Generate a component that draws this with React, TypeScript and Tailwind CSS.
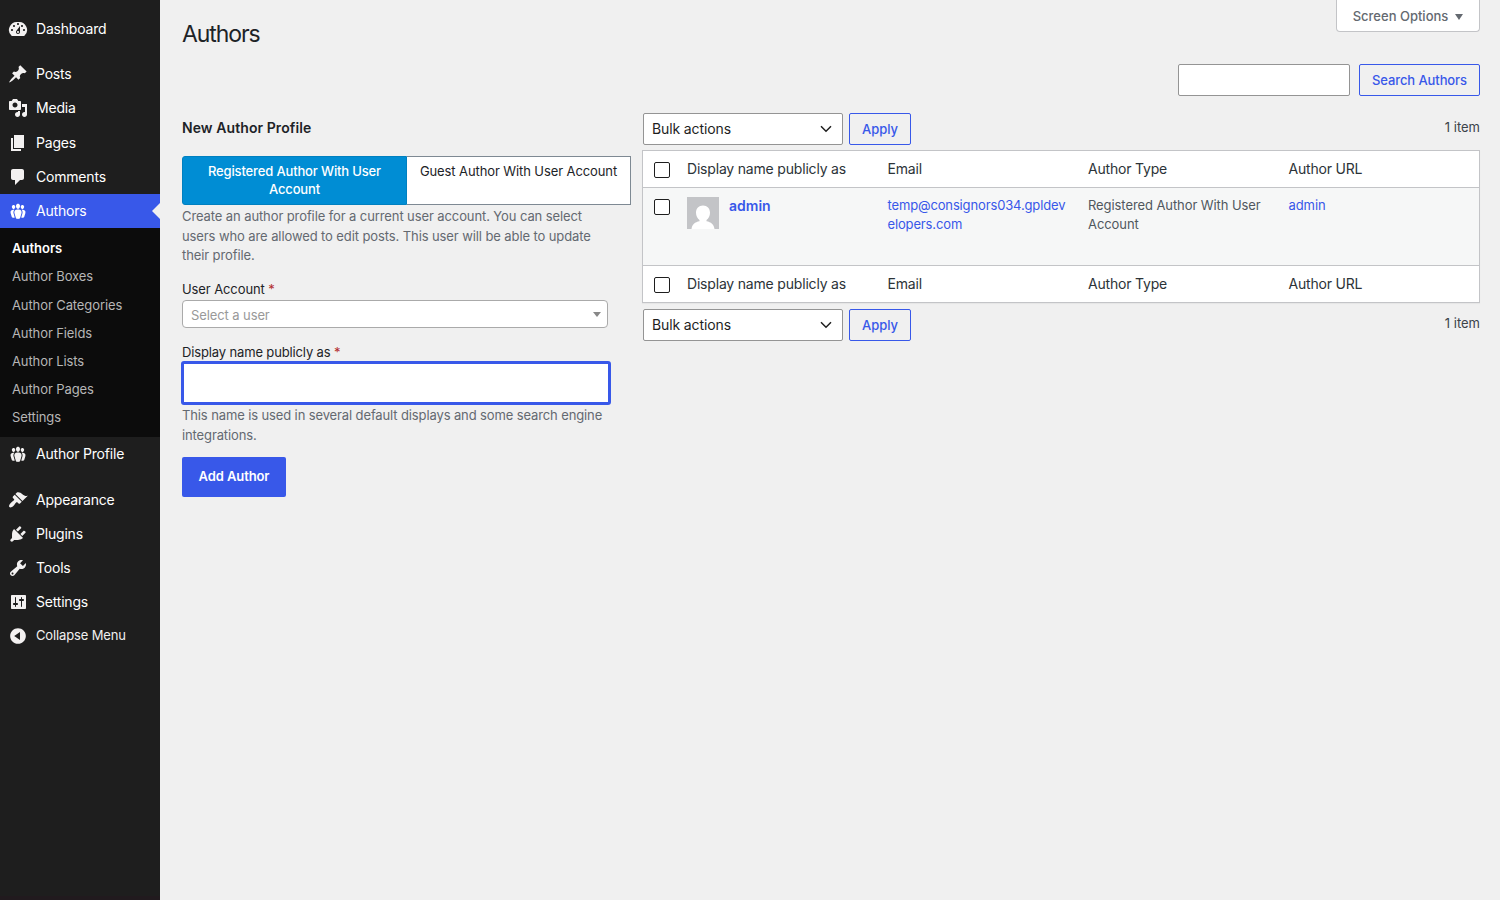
import clsx from 'clsx'

const icons = {
  dashboard:
    'M3.76 17h12.48A7.998 7.998 0 0 0 10 3a8 8 0 0 0-6.24 14zM10 4c.55 0 1 .45 1 1s-.45 1-1 1-1-.45-1-1 .45-1 1-1zM6 6c.55 0 1 .45 1 1s-.45 1-1 1-1-.45-1-1 .45-1 1-1zm8 0c.55 0 1 .45 1 1s-.45 1-1 1-1-.45-1-1 .45-1 1-1zm-5.37 5.55L12 7v6c0 1.1-.9 2-2 2s-2-.9-2-2c0-.57.24-1.08.63-1.45zM4 10c.55 0 1 .45 1 1s-.45 1-1 1-1-.45-1-1 .45-1 1-1zm12 0c.55 0 1 .45 1 1s-.45 1-1 1-1-.45-1-1 .45-1 1-1zm-5 3c0-.55-.45-1-1-1s-1 .45-1 1 .45 1 1 1 1-.45 1-1z',
  pin: 'M10.44 3.02l1.82-1.82 6.36 6.35-1.83 1.82c-1.05-.68-2.48-.57-3.41.36l-.75.75c-.92.93-1.04 2.35-.35 3.41l-1.83 1.82-2.41-2.41-2.8 2.79c-.42.42-3.38 2.71-3.8 2.29s1.86-3.39 2.28-3.81l2.79-2.79L4.1 9.36l1.83-1.82c1.05.69 2.48.57 3.4-.36l.75-.75c.93-.92 1.05-2.35.36-3.41z',
  media:
    'M13 11V4c0-.55-.45-1-1-1h-1.67L9 1H5L3.67 3H2c-.55 0-1 .45-1 1v7c0 .55.45 1 1 1h10c.55 0 1-.45 1-1zM7 4.5c1.38 0 2.5 1.12 2.5 2.5S8.38 9.5 7 9.5 4.5 8.38 4.5 7 5.62 4.5 7 4.5zM14 6h5v10.5c0 1.38-1.12 2.5-2.5 2.5S14 17.88 14 16.5s1.12-2.5 2.5-2.5c.17 0 .34.02.5.05V9h-3V6zm-4 8.05V13h2v3.5c0 1.38-1.12 2.5-2.5 2.5S7 17.88 7 16.5 8.12 14 9.5 14c.17 0 .34.02.5.05z',
  page: 'M6 15V2h10v13H6zm-1 1h8v2H3V5h2v11z',
  comment:
    'M5 2h9c1.1 0 2 .9 2 2v7c0 1.1-.9 2-2 2h-2l-5 5v-5H5c-1.1 0-2-.9-2-2V4c0-1.1.9-2 2-2z',
  groups:
    'M8.03 4.46c-.29 1.28.55 3.46 1.97 3.46 1.41 0 2.25-2.18 1.96-3.46-.22-.98-1.08-1.63-1.96-1.63-.89 0-1.74.65-1.97 1.63zm-4.13.9c-.25 1.08.47 2.93 1.67 2.93s1.92-1.85 1.67-2.93c-.19-.83-.92-1.39-1.67-1.39s-1.48.56-1.67 1.39zm8.86 0c-.25 1.08.47 2.93 1.66 2.93 1.2 0 1.92-1.85 1.67-2.93-.19-.83-.92-1.39-1.67-1.39-.74 0-1.47.56-1.66 1.39zm-.59 11.43l1.25-4.3C14.2 10 12.71 8.47 10 8.47c-2.72 0-4.21 1.53-3.44 4.02l1.26 4.3C8.05 17.51 9 18 10 18c.98 0 1.94-.49 2.17-1.21zm-6.1-7.63c-.49.67-.96 1.83-.42 3.59l1.12 3.79c-.34.2-.77.31-1.2.31-.85 0-1.65-.41-1.85-1.03l-1.07-3.65c-.65-2.11.61-3.4 2.92-3.4.27 0 .54.02.79.06-.1.1-.2.22-.29.33zm8.35-.39c2.31 0 3.58 1.29 2.92 3.4l-1.07 3.65c-.2.62-1 1.03-1.85 1.03-.43 0-.86-.11-1.2-.31l1.11-3.77c.55-1.78.08-2.94-.42-3.61-.08-.11-.18-.23-.28-.33.25-.04.51-.06.79-.06z',
  appearance:
    'M14.48 11.06L7.41 3.99l1.5-1.5c.5-.56 2.3-.47 3.51.32 1.21.8 1.43 1.28 2.91 2.1 1.18.64 2.45 1.26 4.45.85zm-.71.71L6.7 4.7 4.93 6.47c-.39.39-.39 1.02 0 1.41l1.06 1.06c.39.39.39 1.03 0 1.42-.6.6-1.43 1.11-2.21 1.69-.35.26-.7.53-1.01.84C1.43 14.23.4 16.08 1.4 17.07c.99 1 2.84-.03 4.18-1.36.31-.31.58-.66.85-1.02.57-.78 1.08-1.61 1.69-2.21.39-.39 1.02-.39 1.41 0l1.06 1.06c.39.39 1.02.39 1.41 0z',
  plugins:
    'M13.11 4.36L9.87 7.6 8 5.73l3.24-3.24c.35-.34 1.05-.2 1.56.32.52.51.66 1.21.31 1.55zm-8 1.77l.91-1.12 9.01 9.01-1.19.84c-.71.71-2.63 1.16-3.82 1.16H6.14L4.9 17.26c-.59.59-1.54.59-2.12 0-.59-.58-.59-1.53 0-2.12l1.24-1.24v-3.88c0-1.13.4-3.19 1.09-3.89zm7.26 3.97l3.24-3.24c.34-.35 1.04-.21 1.55.31.52.51.66 1.21.31 1.55l-3.24 3.25z',
  tools:
    'M16.68 9.77c-1.34 1.34-3.3 1.67-4.95.99l-5.41 6.52c-.99.99-2.59.99-3.58 0s-.99-2.59 0-3.57l6.52-5.42c-.68-1.65-.35-3.61.99-4.95 1.28-1.28 3.12-1.62 4.72-1.06l-2.89 2.89 2.82 2.82 2.86-2.87c.53 1.58.18 3.39-1.08 4.65zM3.81 16.21c.4.39 1.04.39 1.43 0 .4-.4.4-1.04 0-1.43-.39-.4-1.03-.4-1.43 0-.39.39-.39 1.03 0 1.43z',
  settings:
    'M18 16V4c0-.55-.45-1-1-1H4c-.55 0-1 .45-1 1v12c0 .55.45 1 1 1h13c.55 0 1-.45 1-1zM8 11h1c.55 0 1 .45 1 1s-.45 1-1 1H8v1.5c0 .28-.22.5-.5.5s-.5-.22-.5-.5V13H6c-.55 0-1-.45-1-1s.45-1 1-1h1V5.5c0-.28.22-.5.5-.5s.5.22.5.5V11zm5-2h-1c-.55 0-1-.45-1-1s.45-1 1-1h1V5.5c0-.28.22-.5.5-.5s.5.22.5.5V7h1c.55 0 1 .45 1 1s-.45 1-1 1h-1v5.5c0 .28-.22.5-.5.5s-.5-.22-.5-.5V9z',
  collapse:
    'M10 2.16c4.33 0 7.84 3.51 7.84 7.84s-3.51 7.84-7.84 7.84S2.16 14.33 2.16 10 5.71 2.16 10 2.16zm2 11.72V6.12L6.18 9.97z',
}

type IconName = keyof typeof icons

const submenu = [
  'Authors',
  'Author Boxes',
  'Author Categories',
  'Author Fields',
  'Author Lists',
  'Author Pages',
  'Settings',
]

function MenuItem({
  icon,
  label,
  active,
}: {
  icon: IconName
  label: string
  active?: boolean
}) {
  return (
    <a
      className={clsx(
        'relative flex h-[34.2px] items-center gap-2 pl-2 text-sm tracking-[-0.2px] text-white',
        active && 'bg-[#3858e9]',
      )}
    >
      <svg
        viewBox="0 0 20 20"
        fillRule="evenodd"
        className={clsx('size-5', active ? 'fill-white' : 'fill-[#f3f1f1]')}
      >
        <path d={icons[icon]} />
      </svg>
      {label}
      {active && (
        <span className="absolute top-[9px] right-0 border-8 border-l-0 border-transparent border-r-[#f0f0f0]" />
      )}
    </a>
  )
}

function Sidebar() {
  return (
    <nav className="w-40 shrink-0 border-b-4 border-[#211a1e] bg-[#1e1e1e] pt-3">
      <MenuItem icon="dashboard" label="Dashboard" />
      <div className="h-[11px]" />
      <MenuItem icon="pin" label="Posts" />
      <MenuItem icon="media" label="Media" />
      <MenuItem icon="page" label="Pages" />
      <MenuItem icon="comment" label="Comments" />
      <MenuItem icon="groups" label="Authors" active />
      <ul className="bg-[#0c0c0c] pt-[6.8px] pb-[4.4px]">
        {submenu.map((label, i) => (
          <li
            key={label}
            className={clsx(
              'flex h-[28.2px] items-center pl-3 text-[13px]',
              i === 0
                ? 'font-semibold text-white'
                : 'tracking-[-0.1px] text-[#b6b6b6]',
            )}
          >
            {label}
          </li>
        ))}
      </ul>
      <MenuItem icon="groups" label="Author Profile" />
      <div className="h-[11.6px]" />
      <MenuItem icon="appearance" label="Appearance" />
      <MenuItem icon="plugins" label="Plugins" />
      <MenuItem icon="tools" label="Tools" />
      <MenuItem icon="settings" label="Settings" />
      <button
        type="button"
        className="flex h-[34px] items-center gap-2 pl-2 text-[13px] tracking-[-0.14px] text-[#f0f0f0]"
      >
        <svg viewBox="0 0 20 20" fillRule="evenodd" className="size-5 fill-[#f3f1f1]">
          <path d={icons.collapse} />
        </svg>
        Collapse Menu
      </button>
    </nav>
  )
}

function AuthorForm() {
  return (
    <form className="w-[449px] shrink-0 text-[13px] tracking-[-0.1px]">
      <h2 className="mt-[7px] text-sm leading-5 font-semibold tracking-[0.08px] text-[#1d2327]">
        New Author Profile
      </h2>
      <ul className="mt-[18px] flex h-[49px] text-center leading-[18px]">
        <li className="w-[225px] rounded-l-[3px] border border-[#0080c0] bg-[#008dd4] px-3 pt-[5px] font-medium tracking-[-0.15px] text-white">
          Registered Author With User Account
        </li>
        <li className="w-[224px] border border-l-0 border-[#7e8993] bg-white pt-[5px] text-[#1d2327]">
          Guest Author With User Account
        </li>
      </ul>
      <p className="mt-[2px] w-[426px] leading-[19.5px] text-[#646970]">
        Create an author profile for a current user account. You can select
        users who are allowed to edit posts. This user will be able to update
        their profile.
      </p>
      <label className="mt-[13px] block leading-[21px] text-[#1d2327]">
        User Account <span className="text-[#b32d2e]">*</span>
      </label>
      <div className="flex h-7 w-[426px] items-center justify-between rounded border border-[#aaa] bg-white pr-[6px] pl-2 text-[#999]">
        <span className="pt-1">Select a user</span>
        <span className="mt-px border-x-4 border-t-[5px] border-transparent border-t-[#888]" />
      </div>
      <label className="mt-[14px] block leading-5 tracking-[-0.14px] text-[#1d2327]">
        Display name publicly as <span className="text-[#b32d2e]">*</span>
      </label>
      <input
        type="text"
        className="-mt-px -ml-px block h-11 w-[430px] rounded-[3px] border-3 border-[#3858e9] bg-white outline-none"
      />
      <p className="w-[426px] leading-5 tracking-[-0.12px] text-[#646970]">
        This name is used in several default displays and some search engine
        integrations.
      </p>
      <button
        type="button"
        className="mt-3 h-10 w-[104px] rounded-[2px] bg-[#3858e9] font-semibold text-white"
      >
        Add Author
      </button>
    </form>
  )
}

function BulkActions() {
  return (
    <div className="flex h-8 gap-[6px] pl-px">
      <div className="flex w-[200px] items-center justify-between rounded-[2px] border border-[#949494] bg-white pr-[10px] pl-2 text-sm tracking-[-0.12px] text-[#1e1e1e]">
        Bulk actions
        <svg viewBox="0 0 12 8" className="h-2 w-3 fill-none stroke-[#1e1e1e] stroke-[1.5]">
          <path d="M1 1.200l5 5 5-5" />
        </svg>
      </div>
      <button
        type="button"
        className="w-[62px] rounded-[2px] border border-[#3858e9] pt-0.5 text-[13px] font-medium text-[#3858e9]"
      >
        Apply
      </button>
      <span className="ml-auto pt-1 text-[13px] leading-5 text-[#3c434a]">
        1 item
      </span>
    </div>
  )
}

function Checkbox() {
  return (
    <span className="block size-4 rounded-[2px] border border-[#1e1e1e] bg-white" />
  )
}

function HeadingRow() {
  return (
    <div className="grid h-9 grid-cols-[44px_200.5px_200.5px_200.5px_1fr] text-sm leading-9 tracking-[-0.19px] text-[#2c3338]">
      <span className="flex items-center pt-0.5 pl-[11px]">
        <Checkbox />
      </span>
      <span>Display name publicly as</span>
      <span>Email</span>
      <span>Author Type</span>
      <span>Author URL</span>
    </div>
  )
}

function AuthorsTable() {
  return (
    <div className="mt-[5px] mb-[6px] border border-[#c3c4c7] bg-white shadow-[0_1px_1px_rgba(0,0,0,0.04)]">
      <HeadingRow />
      <div className="grid h-[79px] grid-cols-[44px_200.5px_200.5px_200.5px_1fr] border-y border-[#c3c4c7] bg-[#f6f7f7] pt-2 text-[13px] leading-[19px] tracking-[-0.08px] text-[#50575e]">
        <span className="pt-[3px] pl-[11px]">
          <Checkbox />
        </span>
        <div className="flex gap-[10px]">
          <svg viewBox="0 0 32 32" className="mt-px size-8">
            <path fill="#c3c4c7" d="M0 0h32v32H0z" />
            <path
              fill="#fff"
              d="M16 8.500c4.200 0 7 3.100 7 7.200 0 3.200-1.500 5.800-3.500 7.200v1.300c4.500.7 7.500 3.300 8 7.800h-23c.5-4.500 3.500-7.100 8-7.800v-1.300c-2-1.400-3.500-4-3.500-7.200 0-4.100 2.800-7.200 7-7.200z"
            />
          </svg>
          <a className="text-sm leading-5 font-semibold tracking-normal text-[#3858e9]">
            admin
          </a>
        </div>
        <a className="w-[181px] tracking-[-0.14px] break-all text-[#3858e9]">
          temp@consignors034.gpldevelopers.com
        </a>
        <span className="w-[180px]">Registered Author With User Account</span>
        <a className="text-[#3858e9]">admin</a>
      </div>
      <HeadingRow />
    </div>
  )
}

export default function App() {
  return (
    <div className="flex h-screen bg-[#f0f0f0] font-['Inter',sans-serif]">
      <Sidebar />
      <main className="flex-1 pr-5 pl-[22px]">
        <header className="flex h-16 items-start justify-between">
          <h1 className="mt-[19px] text-[23px] leading-[30px] tracking-[-1.1px] text-[#1d2327]">
            Authors
          </h1>
          <button
            type="button"
            className="flex h-8 w-36 items-center justify-center gap-[7px] rounded-b border border-t-0 border-[#c3c4c7] bg-white pt-0.5 text-[13px] font-medium text-[#646970]"
          >
            Screen Options
            <span className="border-x-4 border-t-[6px] border-transparent border-t-[#646970]" />
          </button>
        </header>
        <div className="flex h-8 justify-end gap-[9px]">
          <input
            type="search"
            className="w-[172px] rounded-[2px] border border-[#949494] bg-white"
          />
          <button
            type="button"
            className="w-[121px] rounded-[2px] border border-[#3858e9] pt-0.5 text-[13px] font-medium tracking-[-0.1px] text-[#3858e9]"
          >
            Search Authors
          </button>
        </div>
        <div className="flex gap-[11px] pt-[15px]">
          <AuthorForm />
          <section className="flex-1 pt-[2px]">
            <BulkActions />
            <AuthorsTable />
            <BulkActions />
          </section>
        </div>
      </main>
    </div>
  )
}
